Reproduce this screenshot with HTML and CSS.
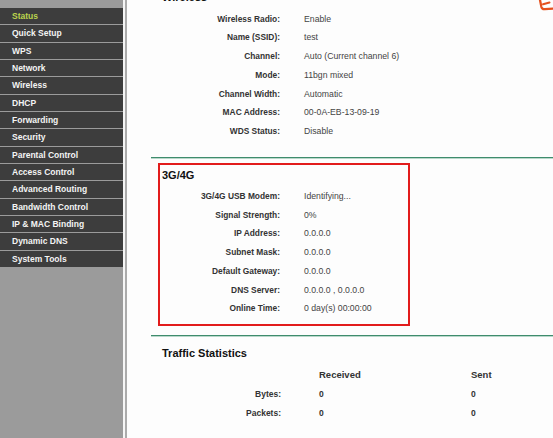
FILE: index.html
```html
<!DOCTYPE html>
<html>
<head>
<meta charset="utf-8">
<title>Status</title>
<link rel="stylesheet" href="styles.css">
</head>
<body>
<div class="page">
  <nav class="sidebar">
    <ul class="menu">
      <li class="item active">Status</li>
      <li class="item">Quick Setup</li>
      <li class="item">WPS</li>
      <li class="item">Network</li>
      <li class="item">Wireless</li>
      <li class="item">DHCP</li>
      <li class="item">Forwarding</li>
      <li class="item">Security</li>
      <li class="item">Parental Control</li>
      <li class="item">Access Control</li>
      <li class="item">Advanced Routing</li>
      <li class="item">Bandwidth Control</li>
      <li class="item">IP &amp; MAC Binding</li>
      <li class="item">Dynamic DNS</li>
      <li class="item">System Tools</li>
    </ul>
  </nav>
  <main class="main">
    <section class="wireless">
      <h2 class="title">Wireless</h2>
      <div class="kv kv-wide">
        <div class="k">Wireless Radio:</div><div class="v">Enable</div>
        <div class="k">Name (SSID):</div><div class="v">test</div>
        <div class="k">Channel:</div><div class="v">Auto (Current channel 6)</div>
        <div class="k">Mode:</div><div class="v">11bgn mixed</div>
        <div class="k">Channel Width:</div><div class="v">Automatic</div>
        <div class="k">MAC Address:</div><div class="v">00-0A-EB-13-09-19</div>
        <div class="k">WDS Status:</div><div class="v">Disable</div>
      </div>
    </section>
    <div class="rule"></div>
    <section class="box">
      <h2 class="title box-title">3G/4G</h2>
      <div class="kv kv-box">
        <div class="k">3G/4G USB Modem:</div><div class="v">Identifying...</div>
        <div class="k">Signal Strength:</div><div class="v">0%</div>
        <div class="k">IP Address:</div><div class="v">0.0.0.0</div>
        <div class="k">Subnet Mask:</div><div class="v">0.0.0.0</div>
        <div class="k">Default Gateway:</div><div class="v">0.0.0.0</div>
        <div class="k">DNS Server:</div><div class="v">0.0.0.0 , 0.0.0.0</div>
        <div class="k">Online Time:</div><div class="v">0 day(s) 00:00:00</div>
      </div>
    </section>
    <div class="rule rule-2"></div>
    <section class="traffic">
      <h2 class="title traffic-title">Traffic Statistics</h2>
      <div class="stats">
        <div class="k"></div><div class="h">Received</div><div class="h">Sent</div>
        <div class="k">Bytes:</div><div class="n">0</div><div class="n">0</div>
        <div class="k">Packets:</div><div class="n">0</div><div class="n">0</div>
      </div>
    </section>
  </main>
  <svg class="logo" width="15" height="11" viewBox="0 0 15 11">
    <path d="M2 0 L3.4 7 Q4 9.4 6.8 9.2 L15 8.7" fill="none" stroke="#e5501d" stroke-width="2.3" stroke-linecap="round"/>
    <path d="M5 4.3 L11.5 2.5" fill="none" stroke="#e5501d" stroke-width="2" stroke-linecap="round"/>
  </svg>
</div>
</body>
</html>
```

FILE: styles.css
```css
html, body {
  margin: 0;
  padding: 0;
}
body {
  width: 553px;
  height: 438px;
  overflow: hidden;
  background: #fdfdfd;
  font-family: "Liberation Sans", Arial, sans-serif;
}
.page {
  position: relative;
  display: flex;
  height: 438px;
  overflow: hidden;
}
.sidebar {
  width: 123px;
  flex: none;
  background: #9b9b9b;
  border-right: 2px solid #f6f6f6;
  padding-top: 8px;
  box-sizing: content-box;
}
.menu {
  list-style: none;
  margin: 0;
  padding: 0;
  display: flex;
  flex-direction: column;
  gap: 1px;
}
.item {
  height: 16.33px;
  line-height: 17px;
  background: #3d3d3d;
  color: #f4f4f4;
  font-weight: bold;
  font-size: 8.5px;
  padding-left: 12px;
  white-space: nowrap;
}
.item.active {
  color: #bcd44e;
}
.main {
  flex: 1;
  border-left: 2px solid #ababab;
  padding-left: 24px;
  background: #fdfdfd;
}
.title {
  margin: 0;
  font-size: 11px;
  line-height: 16px;
  font-weight: bold;
  color: #111;
}
.wireless .title {
  margin-top: -11px;
  margin-left: 11px;
}
.kv {
  display: grid;
  column-gap: 24px;
  font-size: 8.5px;
}
.kv-wide {
  grid-template-columns: 129px 1fr;
  margin-top: 4.7px;
}
.k {
  text-align: right;
  font-weight: bold;
  color: #333;
  font-size: 8.4px;
  line-height: 18.75px;
  white-space: nowrap;
}
.v {
  color: #444;
  font-size: 8.7px;
  line-height: 18.75px;
  white-space: nowrap;
}
.rule {
  margin-top: 16.35px;
  height: 0;
  border-top: 1px solid #3f8c6d;
  border-bottom: 1px solid #b9d8cb;
}
.box {
  margin-top: 4px;
  margin-left: 7px;
  width: 252px;
  box-sizing: border-box;
  border: 2px solid #e21c1c;
  padding: 1.7px 0 5.7px 0;
}
.box-title {
  padding-left: 2px;
}
.kv-box {
  grid-template-columns: 120px 1fr;
  margin-top: 3.8px;
}
.kv-box .k, .kv-box .v {
  line-height: 18.77px;
}
.rule-2 {
  margin-top: 9.4px;
}
.traffic-title {
  margin-top: 7.6px;
  margin-left: 11px;
}
.stats {
  display: grid;
  grid-template-columns: 168px 152px 1fr;
  margin-top: 5.7px;
}
.stats .k {
  line-height: 18.7px;
  font-size: 8.5px;
  padding-right: 38px;
}
.h {
  font-weight: bold;
  color: #333;
  font-size: 9.5px;
  line-height: 18.7px;
}
.n {
  font-weight: bold;
  color: #333;
  font-size: 8.5px;
  line-height: 18.7px;
}
.logo {
  position: absolute;
  top: 0;
  right: 0;
}
```
